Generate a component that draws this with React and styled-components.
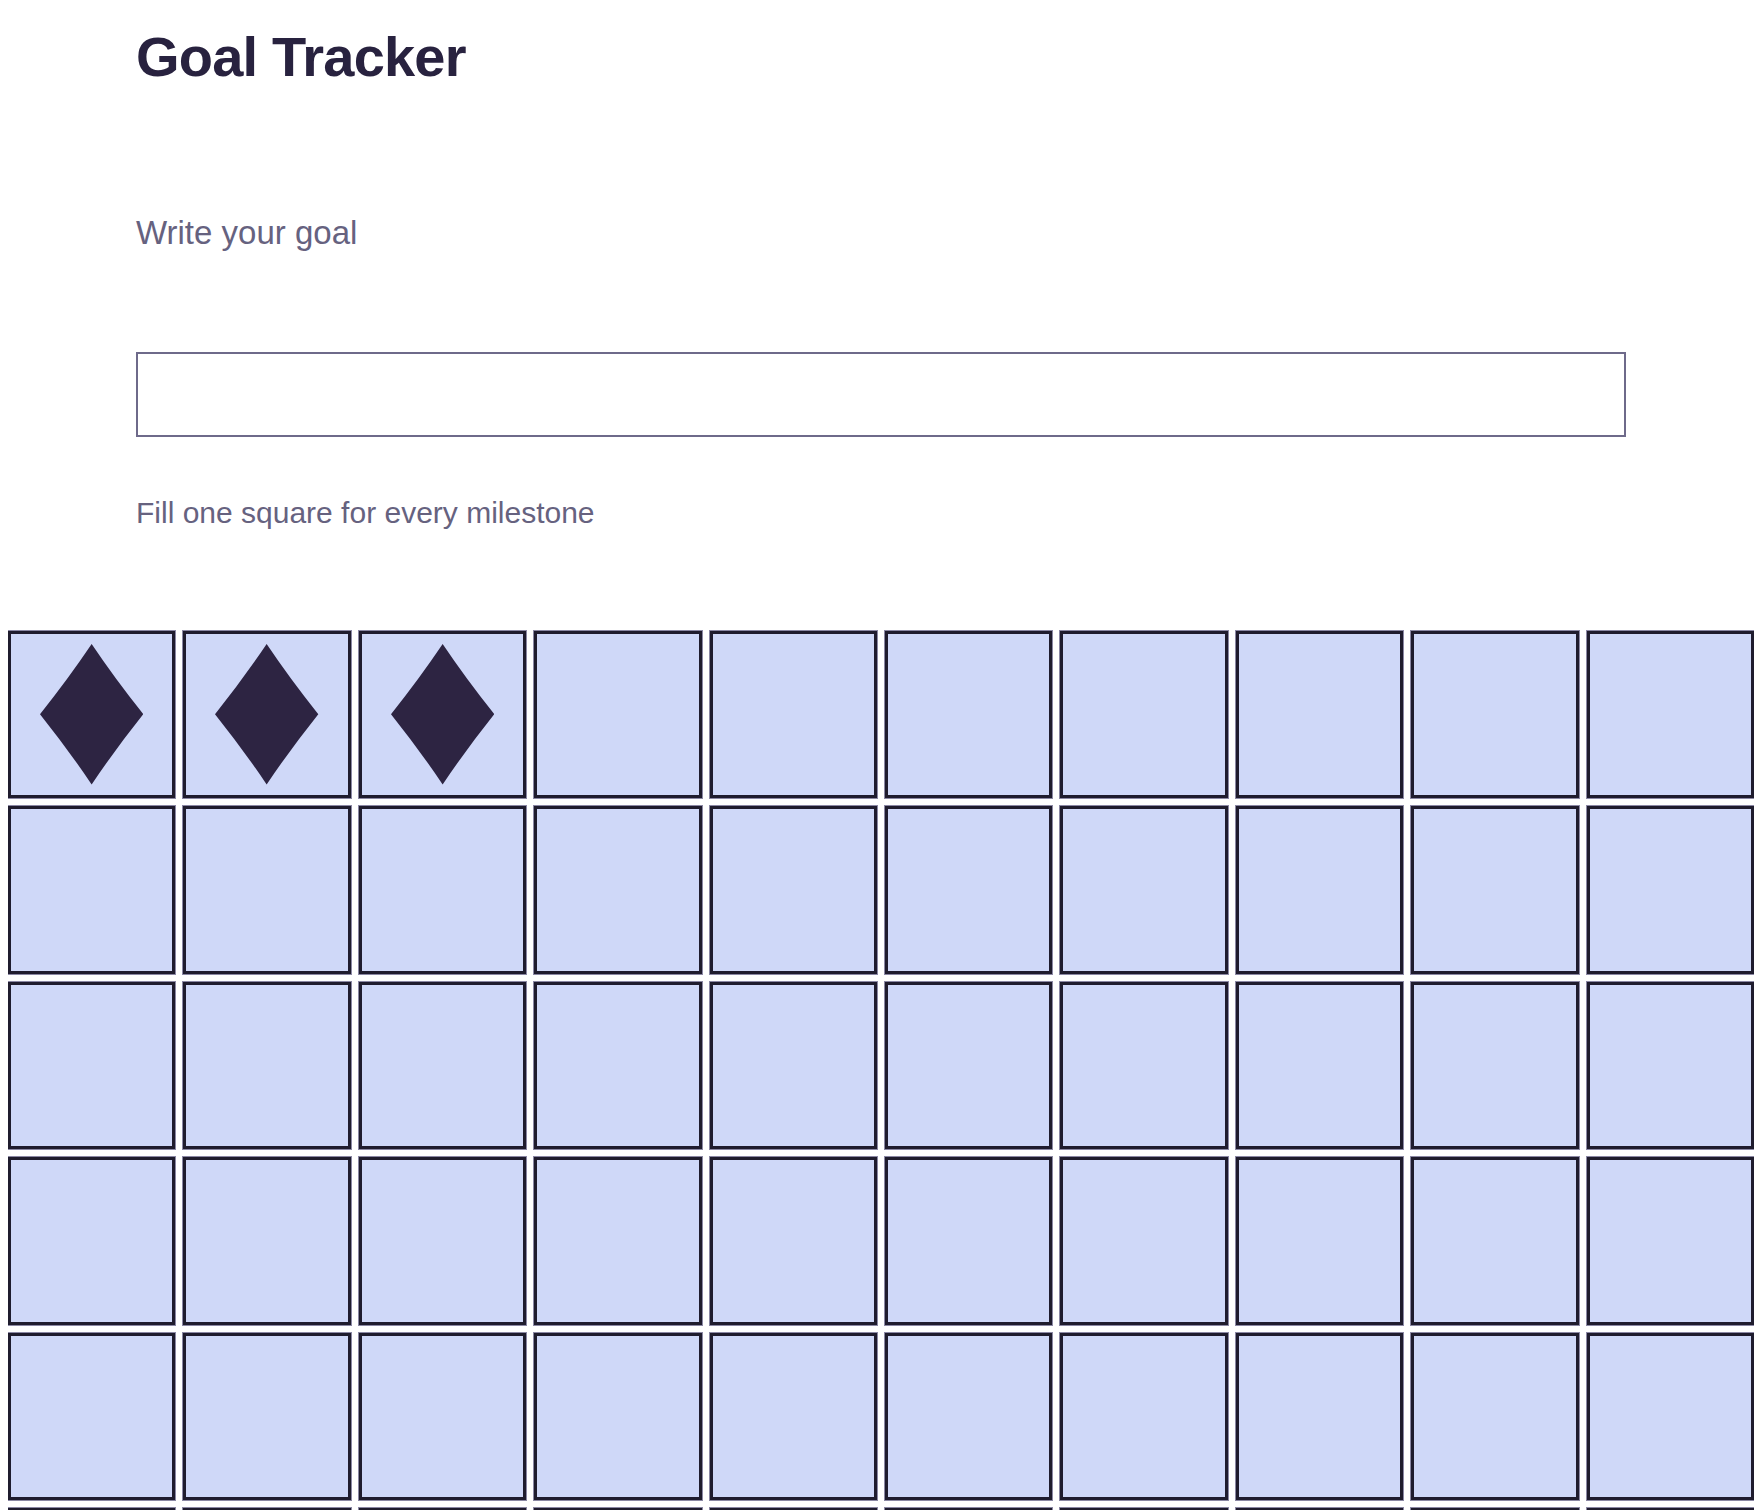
import React, { useState } from "react";
import styled, { createGlobalStyle } from "styled-components";

const GlobalStyle = createGlobalStyle`
    body{
        margin: 8px;
        background: #ffffff;
        font-family: "Liberation Sans", Arial, Helvetica, sans-serif;
    }
    *{
        box-sizing: border-box;
    }
`

const Page = styled.div`
    display: flex;
    flex-direction: column;
    padding-top: 21px;
`

const Header = styled.div`
    display: flex;
    flex-direction: column;
    padding: 0 128px;
`

const Title = styled.h1`
    margin: 0;
    font-size: 56px;
    line-height: 1;
    font-weight: 700;
    letter-spacing: -0.8px;
    color: #28223f;
`

const Label = styled.label`
    display: block;
    margin-top: ${props => props.$gap}px;
    font-size: ${props => props.$size}px;
    line-height: 1;
    color: #66627f;
`

const GoalInput = styled.input`
    display: block;
    width: 100%;
    height: 85px;
    margin-top: 103px;
    padding: 0 16px;
    border: 2px solid #6e6a8a;
    border-radius: 0;
    outline: none;
    font-family: inherit;
    font-size: 28px;
    color: #28223f;
    background: #ffffff;
`

const Grid = styled.div`
    display: grid;
    grid-template-columns: repeat(10, 1fr);
    gap: 8px;
    margin-top: 103px;
`

const Square = styled.button`
    aspect-ratio: 1;
    padding: 0;
    display: flex;
    align-items: center;
    justify-content: center;
    background: #cfd8f8;
    border: 3px solid #1f1c2e;
    box-shadow: 0 0 0 1px #8b88a4;
    border-radius: 0;
    cursor: pointer;

    svg{
        width: 64%;
        height: 87%;
    }
`

function Diamond(){
    return(
        <svg viewBox="0 0 105 143" preserveAspectRatio="none">
            <path d="M52.5 0 Q76 35 105 71.5 Q76 108 52.5 143 Q29 108 0 71.5 Q29 35 52.5 0 Z" fill="#2d2442"/>
        </svg>
    );
}

function App(){
    const [goal, setGoal] = useState("");
    const [filled, setFilled] = useState(() => Array.from({length: 100}, (_, i) => i < 3));

    const toggle = (i) => {
        setFilled(prev => prev.map((v, j) => j === i ? !v : v));
    };

    return(
        <>
            <GlobalStyle/>
            <Page>
                <Header>
                    <Title>{"Goal Tracker"}</Title>
                    <Label htmlFor="goal" $gap={131} $size={33}>{"Write your goal"}</Label>
                    <GoalInput id="goal" value={goal} onChange={e => setGoal(e.target.value)}/>
                    <Label $gap={61} $size={30}>{"Fill one square for every milestone"}</Label>
                </Header>
                <Grid>
                    {filled.map((on, i) => (
                        <Square key={i} onClick={() => toggle(i)} aria-label={`milestone ${i + 1}`}>
                            {on && <Diamond/>}
                        </Square>
                    ))}
                </Grid>
            </Page>
        </>
    );
}

export default App;
